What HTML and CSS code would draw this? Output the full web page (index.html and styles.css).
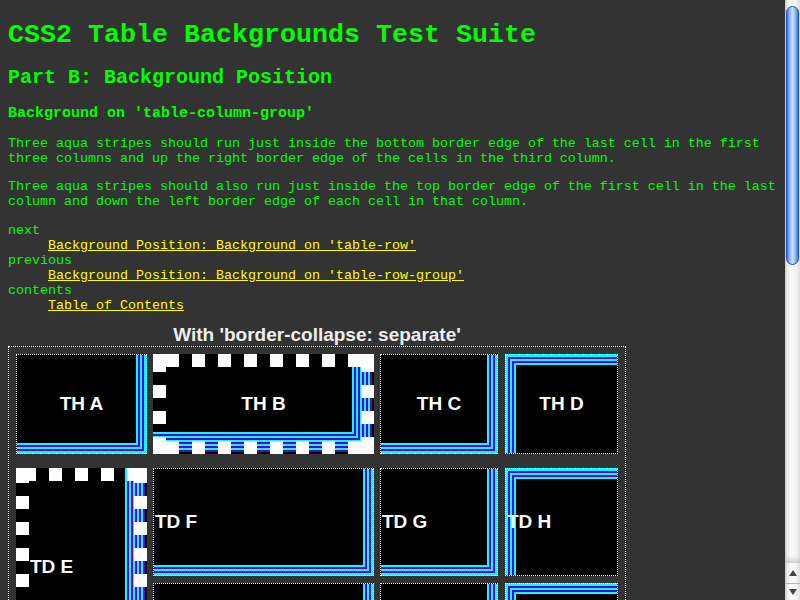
FILE: index.html
```html
<!DOCTYPE html>
<html lang="en">
<head>
<meta charset="utf-8">
<title>CSS2 Table Backgrounds Test Suite</title>
<link rel="stylesheet" href="styles.css">
</head>
<body>
<div class="window">
  <main class="page">
    <h1>CSS2 Table Backgrounds Test Suite</h1>
    <h2>Part B: Background Position</h2>
    <h3>Background on 'table-column-group'</h3>
    <p>Three aqua stripes should run just inside the bottom border edge of the last cell in the first three columns and up the right border edge of the cells in the third column.</p>
    <p>Three aqua stripes should also run just inside the top border edge of the first cell in the last column and down the left border edge of each cell in that column.</p>
    <dl>
      <dt>next</dt>
      <dd><a href="#">Background Position: Background on 'table-row'</a></dd>
      <dt>previous</dt>
      <dd><a href="#">Background Position: Background on 'table-row-group'</a></dd>
      <dt>contents</dt>
      <dd><a href="#">Table of Contents</a></dd>
    </dl>
    <div class="test">
      <div class="caption">With 'border-collapse: separate'</div>
      <div class="grid">
        <div class="cell th br r1 c1">TH A</div>
        <div class="cell th sq sq-b r1 c2">TH B</div>
        <div class="cell th br r1 c3">TH C</div>
        <div class="cell th tl r1 c4">TH D</div>

        <div class="cell td sq sq-e r34 c1">TD E</div>
        <div class="cell td br r3 c2">TD F</div>
        <div class="cell td br r3 c3">TD G</div>
        <div class="cell td tl r3 c4">TD H</div>

        <div class="cell td br r4 c2"></div>
        <div class="cell td br r4 c3"></div>
        <div class="cell td tl r4 c4"></div>
      </div>
    </div>
  </main>
  <div class="scrollbar">
    <div class="track"><div class="thumb"></div></div>
    <div class="sbtn up"></div>
    <div class="sbtn down"></div>
  </div>
</div>
</body>
</html>
```
FILE: styles.css
```css
html, body {
  height: 100%;
  margin: 0;
  overflow: hidden;
  background: #333333;
}

.window {
  display: flex;
  height: 100%;
}

.page {
  flex: 1;
  min-width: 0;
  padding: 0 8px;
  overflow: hidden;
  font-family: "Liberation Mono", "Courier New", monospace;
  font-size: 13.333px;
  color: #00ff00;
}

h1 {
  font-size: 26.667px;
  margin: 19.5px 0 16.5px;
}

h2 {
  font-size: 20px;
  margin: 16.5px 0 15.5px;
}

h3 {
  font-size: 15px;
  margin: 15.5px 0 14.4px;
}

p {
  margin: 13.333px 0;
}

dl {
  margin: 13.333px 0 11px;
}

dd {
  margin-left: 40px;
}

a {
  color: #ffff00;
  text-decoration: underline;
}

/* test table */
.test {
  width: fit-content;
}

.caption {
  text-align: center;
  font: bold 19px "Liberation Sans", Arial, sans-serif;
  color: #eeeeee;
}

.grid {
  display: grid;
  grid-template-columns: 131px 221px 118px 114px;
  grid-template-rows: 100px 0px 108px 83px;
  column-gap: 6px;
  row-gap: 7px;
  padding: 7px;
  border: 1px dotted #ffffff;
}

.r1 { grid-row: 1; }
.r3 { grid-row: 3; }
.r4 { grid-row: 4; }
.r34 { grid-row: 3 / 5; }
.c1 { grid-column: 1; }
.c2 { grid-column: 2; }
.c3 { grid-column: 3; }
.c4 { grid-column: 4; margin-left: 1px; }

.cell {
  display: flex;
  align-items: center;
  padding: 1px;
  border: 1px dotted #ffffff;
  background-color: #000000;
  color: #ffffff;
  font: bold 19px "Liberation Sans", Arial, sans-serif;
  white-space: nowrap;
}

.th { justify-content: center; }
.td { justify-content: flex-start; }

/* stripes along bottom and right edges */
.br {
  background-image:
    linear-gradient(to left, #00ffff 1px, transparent 1px),
    linear-gradient(to top, #00ffff 1px, transparent 1px);
  background-origin: border-box;
  box-shadow:
    inset -2px -2px 0 #00ffff,
    inset -4px -4px 0 #6600cc,
    inset -6px -6px 0 #00ffff,
    inset -8px -8px 0 #6600cc,
    inset -10px -10px 0 #00ffff;
}

/* stripes along top and left edges */
.tl {
  background-image:
    linear-gradient(to right, #00ffff 1px, transparent 1px),
    linear-gradient(to bottom, #00ffff 1px, transparent 1px);
  background-origin: border-box;
  box-shadow:
    inset 2px 2px 0 #00ffff,
    inset 4px 4px 0 #6600cc,
    inset 6px 6px 0 #00ffff,
    inset 8px 8px 0 #6600cc,
    inset 10px 10px 0 #00ffff;
}

/* cells with a thick square-dotted border */
.sq {
  position: relative;
  border: none;
  padding: 14px;
  box-shadow:
    inset -2px -2px 0 #000000,
    inset -4px -4px 0 #6600cc,
    inset -6px -6px 0 #00ffff,
    inset -8px -8px 0 #6600cc,
    inset -10px -10px 0 #00ffff,
    inset -12px -12px 0 #6600cc,
    inset -14px -14px 0 #00ffff,
    inset -16px -16px 0 #6600cc,
    inset -18px -18px 0 #00ffff,
    inset -20px -20px 0 #6600cc,
    inset -22px -22px 0 #00ffff;
}

.sq::after {
  content: "";
  position: absolute;
  inset: 0;
  pointer-events: none;
}

.sq-b::after {
  background:
    linear-gradient(#fff, #fff) 0 0 / 13px 13px no-repeat,
    linear-gradient(#fff, #fff) 100% 0 / 13px 13px no-repeat,
    linear-gradient(#fff, #fff) 0 100% / 13px 13px no-repeat,
    linear-gradient(#fff, #fff) 100% 100% / 13px 13px no-repeat,
    linear-gradient(to right, #fff 13px, transparent 13px) 13px 0 / 26px 13px repeat-x,
    linear-gradient(to right, #fff 13px, transparent 13px) 13px 100% / 26px 13px repeat-x,
    linear-gradient(#fff 13px, transparent 13px) 0 5px / 13px 26px repeat-y,
    linear-gradient(#fff 13px, transparent 13px) 100% 5px / 13px 26px repeat-y;
}

.sq-e::after {
  background:
    linear-gradient(#fff, #fff) 0 0 / 13px 13px no-repeat,
    linear-gradient(#fff, #fff) 100% 0 / 13px 13px no-repeat,
    linear-gradient(#fff, #fff) 0 100% / 13px 13px no-repeat,
    linear-gradient(#fff, #fff) 100% 100% / 13px 13px no-repeat,
    linear-gradient(to right, #fff 13px, transparent 13px) 7px 0 / 26px 13px repeat-x,
    linear-gradient(to right, #fff 13px, transparent 13px) 7px 100% / 26px 13px repeat-x,
    linear-gradient(#fff 13px, transparent 13px) 0 2px / 13px 26px repeat-y,
    linear-gradient(#fff 13px, transparent 13px) 100% 2px / 13px 26px repeat-y;
}

/* scrollbar */
.scrollbar {
  width: 15px;
  flex: none;
  display: flex;
  flex-direction: column;
  background: linear-gradient(to right, #c4c4c4 0, #e9e9e9 2px, #fbfbfb 6px, #f4f4f4 11px, #dedede 15px);
}

.track {
  flex: 1;
  padding: 6px 1px 0 1px;
  box-shadow: inset 0 -8px 6px -6px #bdbdbd;
}

.thumb {
  height: 259px;
  box-sizing: border-box;
  border: 1px solid #1d4fc4;
  border-radius: 7px;
  background: linear-gradient(to right, #3d72da 0, #8dbaf2 25%, #c8e0fc 50%, #8dbaf2 75%, #3d72da 100%);
}

.sbtn {
  display: flex;
  align-items: center;
  justify-content: center;
}

.sbtn.up {
  height: 20px;
}

.sbtn.down {
  height: 16px;
  border-top: 1px solid #b4b4b4;
}

.sbtn.up::before {
  content: "";
  border-left: 4px solid transparent;
  border-right: 4px solid transparent;
  border-bottom: 6px solid #454545;
}

.sbtn.down::before {
  content: "";
  border-left: 4px solid transparent;
  border-right: 4px solid transparent;
  border-top: 6px solid #454545;
}
```
